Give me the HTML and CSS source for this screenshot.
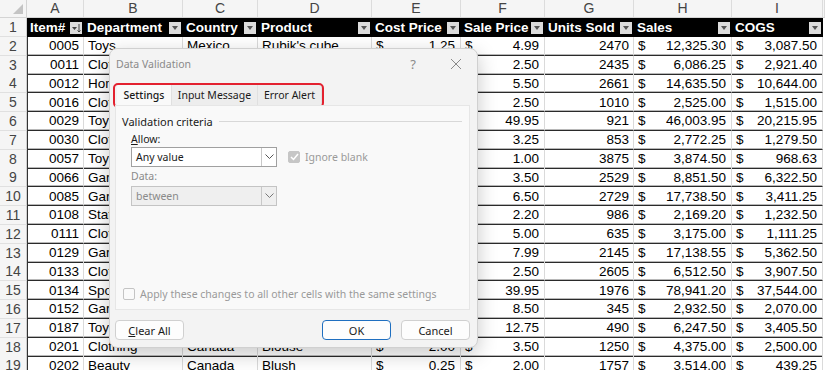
FILE: index.html
```html
<!DOCTYPE html>
<html lang="en">
<head>
    <meta charset="UTF-8">
    <title>Data Validation</title>
    <link rel="stylesheet" href="styles.css">
</head>
<body>
    <div class="sheet">
        <div class="row col-heads">
            <div class="corner"></div>
            <div class="ch">A</div><div class="ch">B</div><div class="ch">C</div>
            <div class="ch">D</div><div class="ch">E</div><div class="ch">F</div>
            <div class="ch">G</div><div class="ch">H</div><div class="ch">I</div>
            <div class="ch"></div>
        </div>
        <div class="row table-head">
            <div class="rn">1</div>
            <div class="hc">Item#<span class="fb sorted"><svg width="10" height="10" viewBox="0 0 10 10"><path d="M1 4h5l-2.5 3z" fill="#444"/><path d="M8 1v8M6.5 7.5L8 9l1.5-1.5" stroke="#444" stroke-width="1" fill="none"/></svg></span></div>
            <div class="hc">Department<span class="fb"></span></div>
            <div class="hc">Country<span class="fb"></span></div>
            <div class="hc">Product<span class="fb"></span></div>
            <div class="hc">Cost Price<span class="fb"></span></div>
            <div class="hc">Sale Price<span class="fb"></span></div>
            <div class="hc">Units Sold<span class="fb"></span></div>
            <div class="hc">Sales<span class="fb"></span></div>
            <div class="hc">COGS<span class="fb"></span></div>
            <div class="edge"></div>
        </div>
        <div id="body"></div>

        <div class="dialog">
            <div class="titlebar">
                <span class="title">Data Validation</span>
                <span class="tb-btn">?</span>
                <span class="tb-btn close"><svg width="12" height="12" viewBox="0 0 12 12"><path d="M1 1l10 10M11 1L1 11" stroke="#8a8a8a" stroke-width="1"/></svg></span>
            </div>
            <div class="tabs">
                <span class="tab active">Settings</span>
                <span class="tab wide">Input Message</span>
                <span class="tab">Error Alert</span>
                <span class="highlight"></span>
            </div>
            <div class="panel">
                <div class="group-title">Validation criteria</div>
                <div class="label"><u>A</u>llow:</div>
                <div class="field-row">
                    <div class="select"><span>Any value</span><span class="arrow"><svg width="9" height="6" viewBox="0 0 9 6"><path d="M0.5 0.5l4 4 4-4" stroke="#555" fill="none"/></svg></span></div>
                    <label class="check disabled"><span class="box checked"><svg width="9" height="8" viewBox="0 0 9 8"><path d="M1 4l2.5 2.5L8 1" stroke="#fff" stroke-width="1.5" fill="none"/></svg></span>Ignore blank</label>
                </div>
                <div class="label muted">Data:</div>
                <div class="field-row">
                    <div class="select disabled"><span>between</span><span class="arrow"><svg width="9" height="6" viewBox="0 0 9 6"><path d="M0.5 0.5l4 4 4-4" stroke="#777" fill="none"/></svg></span></div>
                </div>
                <label class="check apply"><span class="box"></span>Apply these changes to all other cells with the same settings</label>
            </div>
            <div class="buttons">
                <button class="btn"><u>C</u>lear All</button>
                <span class="spacer"></span>
                <button class="btn primary">OK</button>
                <button class="btn">Cancel</button>
            </div>
        </div>
    </div>

    <script>
        const rows = [
            ['0005', 'Toys', 'Mexico', "Rubik's cube", '1.25', '4.99', '2470', '12,325.30', '3,087.50'],
            ['0011', 'Clothing', 'USA', 'T-shirt', '1.20', '2.50', '2435', '6,086.25', '2,921.40'],
            ['0012', 'Home', 'USA', 'Candle', '4.00', '5.50', '2661', '14,635.50', '10,644.00'],
            ['0016', 'Clothing', 'Canada', 'Socks', '1.50', '2.50', '1010', '2,525.00', '1,515.00'],
            ['0029', 'Toys', 'Mexico', 'Drone', '21.95', '49.95', '921', '46,003.95', '20,215.95'],
            ['0030', 'Clothing', 'USA', 'Scarf', '1.50', '3.25', '853', '2,772.25', '1,279.50'],
            ['0057', 'Toys', 'Canada', 'Yo-yo', '0.25', '1.00', '3875', '3,874.50', '968.63'],
            ['0066', 'Garden', 'USA', 'Seeds', '2.50', '3.50', '2529', '8,851.50', '6,322.50'],
            ['0085', 'Garden', 'Mexico', 'Gloves', '1.25', '6.50', '2729', '17,738.50', '3,411.25'],
            ['0108', 'Stationery', 'USA', 'Notebook', '1.25', '2.20', '986', '2,169.20', '1,232.50'],
            ['0111', 'Clothing', 'Canada', 'Hat', '1.75', '5.00', '635', '3,175.00', '1,111.25'],
            ['0129', 'Garden', 'USA', 'Trowel', '2.50', '7.99', '2145', '17,138.55', '5,362.50'],
            ['0133', 'Clothing', 'Mexico', 'Belt', '1.50', '2.50', '2605', '6,512.50', '3,907.50'],
            ['0134', 'Sports', 'USA', 'Racket', '19.00', '39.95', '1976', '78,941.20', '37,544.00'],
            ['0152', 'Garden', 'Canada', 'Hose', '6.00', '8.50', '345', '2,932.50', '2,070.00'],
            ['0187', 'Toys', 'USA', 'Puzzle', '6.95', '12.75', '490', '6,247.50', '3,405.50'],
            ['0201', 'Clothing', 'Canada', 'Blouse', '2.00', '3.50', '1250', '4,375.00', '2,500.00'],
            ['0202', 'Beauty', 'Canada', 'Blush', '0.25', '2.00', '1757', '3,514.00', '439.25']
        ];

        const money = v => `<div class="c cur"><span>$</span><span>${v}</span></div>`;

        document.getElementById('body').innerHTML = rows.map((r, i) => `
            <div class="row">
                <div class="rn">${i + 2}</div>
                <div class="c num first">${r[0]}</div>
                <div class="c">${r[1]}</div>
                <div class="c">${r[2]}</div>
                <div class="c">${r[3]}</div>
                ${money(r[4])}
                ${money(r[5])}
                <div class="c num">${r[6]}</div>
                ${money(r[7])}
                ${money(r[8])}
                <div class="edge"></div>
            </div>`).join('');
    </script>
</body>
</html>
```

FILE: styles.css
```css
/* Base */
* {
    margin: 0;
    padding: 0;
    box-sizing: border-box;
}

body {
    background: #fff;
    font-family: "Liberation Sans", Arial, sans-serif;
    color: #000;
}

/* Sheet grid */
.sheet {
    position: relative;
    width: 825px;
    height: 370px;
    overflow: hidden;
}

.row {
    display: grid;
    grid-template-columns: 27px 57px 99px 75px 114px 89px 84px 89px 98px 91px 2px;
    height: 18.8px;
    font-size: 13.5px;
}

.col-heads {
    height: 18px;
    background: #f5f5f5;
    border-bottom: 1px solid #d4d4d4;
}

.corner {
    position: relative;
    border-right: 1px solid #d4d4d4;
}

.corner::after {
    content: "";
    position: absolute;
    right: 3px;
    bottom: 3px;
    border-left: 10px solid transparent;
    border-bottom: 10px solid #c4c4c4;
}

.ch {
    text-align: center;
    color: #444;
    font-size: 14px;
    line-height: 17px;
    border-right: 1px solid #dcdcdc;
}

.rn {
    background: #f5f5f5;
    color: #444;
    font-size: 14px;
    text-align: center;
    line-height: 18px;
    border-right: 1px solid #cfcfcf;
    border-bottom: 1px solid #e0e0e0;
}

/* Table header row */
.table-head .hc {
    background: #000;
    color: #fff;
    font-weight: bold;
    font-size: 13.5px;
    display: flex;
    align-items: center;
    justify-content: space-between;
    padding: 0 2px 0 3px;
    white-space: nowrap;
    overflow: hidden;
}

.fb {
    width: 12px;
    height: 12px;
    flex-shrink: 0;
    background: #dcdcdc;
    display: flex;
    align-items: center;
    justify-content: center;
}

.fb::after {
    content: "";
    border-left: 3px solid transparent;
    border-right: 3px solid transparent;
    border-top: 4px solid #555;
}

.fb.sorted::after {
    display: none;
}

.edge {
    background: #fff;
}

/* Data cells */
.c {
    display: flex;
    align-items: center;
    padding: 0 4px;
    white-space: nowrap;
    overflow: hidden;
    border-right: 1px solid #dadada;
    border-bottom: 1px solid #2a2a2a;
    box-shadow: inset 0 -1px 0 #b8b8b8;
}

.c.first {
    border-left: 1px solid #333;
}

.num {
    justify-content: flex-end;
}

.cur {
    justify-content: space-between;
    padding-right: 5px;
}

/* Dialog */
.dialog {
    position: absolute;
    left: 109px;
    top: 48px;
    width: 369px;
    height: 300px;
    background: #f3f3f3;
    border: 1px solid #d0d0d0;
    border-radius: 8px;
    box-shadow: 0 6px 20px rgba(0,0,0,0.22);
    font-family: "Noto Sans", "Open Sans", sans-serif;
    font-size: 10.5px;
    color: #1a1a1a;
}

.titlebar {
    height: 30px;
    display: flex;
    align-items: center;
    padding-left: 6px;
    padding-right: 9px;
}

.title {
    color: #8a8a8a;
    font-size: 10.5px;
    flex: 1;
}

.tb-btn {
    width: 24px;
    text-align: center;
    color: #8a8a8a;
    font-size: 13px;
    display: flex;
    justify-content: center;
}

.tb-btn.close {
    margin-left: 19px;
}

.tabs {
    position: relative;
    display: flex;
    margin: 6px 0 0 7px;
    height: 20px;
}

.tab {
    width: 64px;
    display: flex;
    align-items: center;
    justify-content: center;
    background: #ededed;
    border-right: 1px solid #e0e0e0;
}

.tab.active {
    width: 55px;
    background: #f9f9f9;
    font-weight: 500;
}

.tab.wide {
    width: 86px;
}

.highlight {
    position: absolute;
    left: -4px;
    top: -2px;
    width: 211px;
    height: 25px;
    border: 2px solid #e3212f;
    border-radius: 5px;
}

.panel {
    margin-left: 5px;
    width: 355px;
    height: 205px;
    background: #f9f9f9;
    border: 1px solid #e6e6e6;
    position: relative;
}

.group-title {
    display: flex;
    align-items: center;
    gap: 6px;
    padding: 7px 7px 0 6px;
    height: 23px;
    font-size: 11px;
}

.group-title::after {
    content: "";
    flex: 1;
    border-top: 1px solid #d8d8d8;
}

.label {
    margin: 4px 0 0 15px;
    height: 13px;
    line-height: 13px;
}

.label.muted {
    margin-top: 3px;
    color: #8a8a8a;
}

.field-row {
    display: flex;
    align-items: center;
    margin: 1px 0 0 15px;
    gap: 11px;
}

.label.muted + .field-row {
    margin-top: 3px;
}

.select {
    width: 146px;
    height: 20px;
    background: #fff;
    border: 1px solid #a0a0a0;
    display: flex;
    align-items: center;
    justify-content: space-between;
    padding-left: 4px;
}

.select.disabled {
    background: #efefef;
    border-color: #c4c4c4;
    color: #8a8a8a;
}

.arrow {
    width: 15px;
    height: 100%;
    border-left: 1px solid #c8c8c8;
    display: flex;
    align-items: center;
    justify-content: center;
}

.check {
    display: flex;
    align-items: center;
    gap: 5px;
    color: #9a9a9a;
}

.box {
    width: 12px;
    height: 12px;
    border: 1px solid #c4c4c4;
    border-radius: 2px;
    background: #fafafa;
    display: flex;
    align-items: center;
    justify-content: center;
}

.box.checked {
    background: #c6c6c6;
    border-color: #c6c6c6;
}

.check.apply {
    position: absolute;
    left: 7px;
    bottom: 8px;
}

/* Buttons */
.buttons {
    display: flex;
    gap: 10px;
    margin: 10px 7px 0 5px;
}

.spacer {
    flex: 1;
}

.btn {
    width: 69px;
    height: 20px;
    background: #fdfdfd;
    border: 1px solid #d0d0d0;
    border-radius: 4px;
    font-family: inherit;
    font-size: 11px;
    color: #1a1a1a;
}

.btn.primary {
    border: 1.5px solid #1f6fc0;
}
```
